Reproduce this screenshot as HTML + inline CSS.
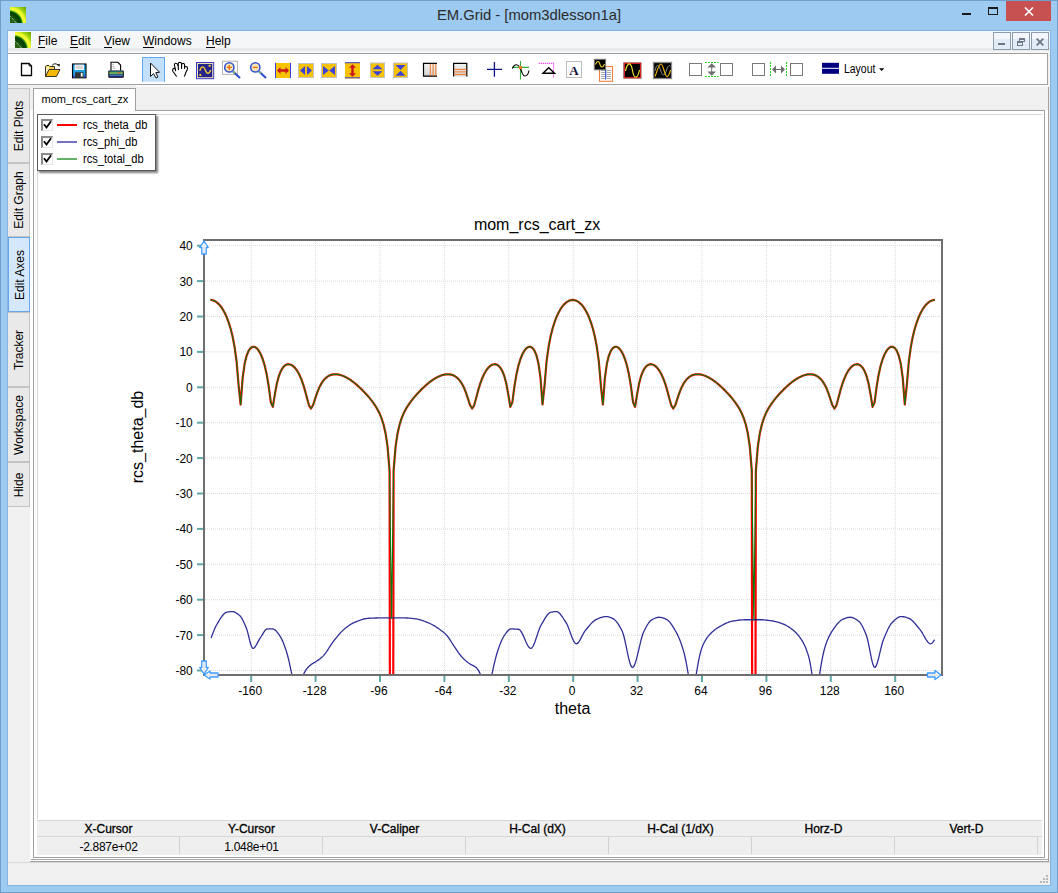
<!DOCTYPE html>
<html><head><meta charset="utf-8">
<style>
html,body{margin:0;padding:0;width:1058px;height:893px;overflow:hidden;background:#9ccaf0;font-family:"Liberation Sans",sans-serif;}
.abs{position:absolute;}
#frame{position:absolute;left:0;top:0;width:1058px;height:893px;box-sizing:border-box;border:1px solid #6f9ecb;background:#9ccaf0;}
#client{position:absolute;left:7px;top:30px;width:1044px;height:856px;box-sizing:border-box;border:1px solid #86b4e0;}
#title{position:absolute;left:0;top:8px;width:1058px;text-align:center;font-size:14.8px;color:#2b2b2b;line-height:15px;}
#menubar{position:absolute;left:8px;top:31px;width:1042px;height:22px;background:#f5f6f7;}
#menubar .m{position:absolute;top:4px;font-size:12px;line-height:12px;color:#000;}
#menubar .m u{text-decoration:none;position:relative;}
#menubar .m u:after{content:"";position:absolute;left:0;right:0;bottom:0px;height:1px;background:#000;}
#toolbar{position:absolute;left:8px;top:53px;width:1040px;height:32px;background:#fff;border:1px solid #a0a0a0;border-left:none;box-sizing:border-box;}
#appbg{position:absolute;left:8px;top:53px;width:1042px;height:832px;background:#f0f0f0;}
.vtab{position:absolute;left:8px;width:22px;background:#e9e9e9;border:1px solid #c3c3c3;border-left:none;box-sizing:border-box;}
.vtab span{position:absolute;left:calc(50% + 0.5px);top:50%;transform:translate(-50%,-50%) rotate(-90deg);font-size:12px;white-space:nowrap;color:#000;line-height:12px;}
.vtab.sel{background:#d5e8fb;border:1px solid #66a6ec;}
#status{position:absolute;left:8px;top:862px;width:1042px;height:23px;background:#f0f0f0;border-top:1px solid #d9d9d9;box-sizing:border-box;}
.hd{position:absolute;top:823px;width:143px;text-align:center;font-size:12px;line-height:13px;color:#000;-webkit-text-stroke:0.3px #000;}
.vl{position:absolute;top:841px;width:143px;text-align:center;font-size:12px;line-height:13px;color:#000;letter-spacing:-0.3px;}
.sep{position:absolute;top:837px;width:1px;height:17px;background:#d2d2d2;}
.cb{position:absolute;left:41px;width:12px;height:12px;box-sizing:border-box;background:#fff;border-top:2px solid #8a8a8a;border-left:2px solid #8a8a8a;border-right:1px solid #e6e6e6;border-bottom:1px solid #e6e6e6;}
.lg{position:absolute;left:82.5px;font-size:12.5px;line-height:12px;color:#000;transform:scaleX(0.89);transform-origin:0 0;}
</style></head><body>
<div id="frame"></div>
<svg width="0" height="0" style="position:absolute"><defs><radialGradient id="icg" gradientUnits="userSpaceOnUse" cx="-1" cy="17" r="23"><stop offset="0" stop-color="#3a6a18"/><stop offset="0.3" stop-color="#1a5a0c"/><stop offset="0.5" stop-color="#033a05"/><stop offset="0.56" stop-color="#1e8a0c"/><stop offset="0.62" stop-color="#f4fa30"/><stop offset="0.72" stop-color="#eef830"/><stop offset="0.8" stop-color="#a8dc10"/><stop offset="1" stop-color="#70a800"/></radialGradient></defs></svg>
<!-- title bar -->
<svg class="abs" style="left:10px;top:7px" width="16" height="16" viewBox="0 0 16 16">
<rect width="16" height="16" fill="url(#icg)"/>
<path d="M0.5 9.5 L6.5 16" stroke="#e8e8e8" stroke-width="1" stroke-dasharray="1 1"/>
</svg>
<div id="title">EM.Grid - [mom3dlesson1a]</div>
<div class="abs" style="left:962px;top:13px;width:9px;height:2px;background:#1a1a1a"></div>
<div class="abs" style="left:988px;top:7px;width:10px;height:8px;border:1px solid #1a1a1a;border-top-width:2px;box-sizing:border-box"></div>
<div class="abs" style="left:1006px;top:1px;width:45px;height:20px;background:#c75050"></div>
<svg class="abs" style="left:1024px;top:7px" width="10" height="9" viewBox="0 0 10 9"><path d="M1 0.5 L9 8.5 M9 0.5 L1 8.5" stroke="#fff" stroke-width="1.6"/></svg>

<div id="client"></div>
<div id="appbg"></div>
<!-- menubar -->
<div id="menubar">
<div class="abs" style="left:0;top:17px;width:1042px;height:3px;background:#e9eaeb"></div>
<svg class="abs" style="left:7px;top:1px" width="16" height="16" viewBox="0 0 16 16">
<rect width="16" height="16" fill="url(#icg)"/>
<path d="M0.5 9.5 L6.5 16" stroke="#e8e8e8" stroke-width="1" stroke-dasharray="1 1"/>
</svg>
<div class="m" style="left:30px"><u>F</u>ile</div>
<div class="m" style="left:62px"><u>E</u>dit</div>
<div class="m" style="left:96px"><u>V</u>iew</div>
<div class="m" style="left:135px"><u>W</u>indows</div>
<div class="m" style="left:198px"><u>H</u>elp</div>
<div class="abs" style="left:985px;top:1px;width:18px;height:18px;background:linear-gradient(#f3f7fc 0,#f3f7fc 35%,#e2ebf6 36%);border:1px solid #8d9db0;box-sizing:border-box"><div class="abs" style="left:4px;top:10px;width:7px;height:2px;background:#6b7785"></div></div>
<div class="abs" style="left:1004px;top:1px;width:18px;height:18px;background:linear-gradient(#f3f7fc 0,#f3f7fc 35%,#e2ebf6 36%);border:1px solid #8d9db0;box-sizing:border-box">
<div class="abs" style="left:6px;top:5px;width:6px;height:4px;border:1px solid #6b7785;border-top-width:2px;box-sizing:border-box"></div>
<div class="abs" style="left:4px;top:8px;width:6px;height:5px;border:1px solid #6b7785;border-top-width:2px;box-sizing:border-box;background:#e2ebf6"></div></div>
<div class="abs" style="left:1023px;top:1px;width:18px;height:18px;background:linear-gradient(#f3f7fc 0,#f3f7fc 35%,#e2ebf6 36%);border:1px solid #8d9db0;box-sizing:border-box">
<svg class="abs" style="left:4px;top:5px" width="8" height="8" viewBox="0 0 8 8"><path d="M0.7 0.7 L7.3 7.3 M7.3 0.7 L0.7 7.3" stroke="#6b7785" stroke-width="1.8"/></svg></div>
</div>

<div id="toolbar"></div>
<svg class="abs" style="left:0;top:0" width="1058" height="90" viewBox="0 0 1058 90">
<!-- new -->
<path d="M21.5 63.5 H29 L31.5 66 V75.5 H21.5 Z" fill="#fff" stroke="#000" stroke-width="1.3" stroke-linejoin="miter"/>
<path d="M29 63.5 V66 H31.5" fill="none" stroke="#000" stroke-width="0.8"/>
<!-- open folder -->
<path d="M45.5 76.5 V66.5 L46.5 65.5 H49 L50 66.5 H54.5 V69" fill="#f7d24a" stroke="#222" stroke-width="0.9"/>
<path d="M46.2 67 L49 66.5 L49 75 L46.2 76 Z" fill="#fbeebb"/>
<path d="M45.5 76.5 L49 69.5 H60 L56.5 76.5 Z" fill="#f3b80a" stroke="#222" stroke-width="0.9" stroke-linejoin="round"/>
<path d="M52 65.5 Q55 62 58.5 65.5" fill="none" stroke="#111" stroke-width="1"/>
<path d="M57 64.5 L59.5 66.8 L59.8 63.8 Z" fill="#111"/>
<!-- save -->
<rect x="72.5" y="64" width="13.5" height="13.8" fill="#1fa1e6" stroke="#000" stroke-width="1.1"/>
<rect x="74.6" y="64.6" width="9.3" height="5.4" fill="#fff"/>
<rect x="75.6" y="65.4" width="7.3" height="3.6" fill="#d6d6d6"/>
<rect x="75" y="72.3" width="8.5" height="5.2" fill="#333"/>
<rect x="80.8" y="73" width="1.8" height="3.6" fill="#fff"/>
<rect x="73" y="75.3" width="1.3" height="2" fill="#3b3bd1"/>
<rect x="84.3" y="75.3" width="1.3" height="2" fill="#3b3bd1"/>
<!-- printer -->
<path d="M111 70.5 V62.3 H117.8 L120.6 65 V70.5" fill="#fff" stroke="#000" stroke-width="1.1"/>
<path d="M112.5 64.5 h1.5 M112.5 66.5 h2 M112.5 68.2 h3" stroke="#999" stroke-width="0.7"/>
<rect x="108.3" y="70.5" width="15.5" height="7.3" rx="1" fill="#000"/>
<rect x="109.3" y="71.5" width="13.5" height="1" fill="#3cc9f0"/>
<rect x="109.3" y="72.5" width="13.5" height="1.2" fill="#c4e830"/>
<rect x="109.3" y="73.7" width="13.5" height="0.8" fill="#3cc9f0"/>
<rect x="118" y="72.3" width="2.5" height="1" fill="#f04040"/>
<rect x="109.3" y="75.2" width="13.5" height="1.2" fill="#6a8ee8"/>
<rect x="109.3" y="76.4" width="13.5" height="0.8" fill="#1a1a88"/>
<!-- pointer button -->
<rect x="142.5" y="57.5" width="22" height="24.3" fill="#c3e0fa"/><path d="M142.5 81.8 V57.5 H164.5 V81.8" fill="none" stroke="#62a6ee" stroke-width="1"/>
<path d="M150.5 63 V76.5 L153.6 73.6 L156 78 L158 77 L155.8 72.6 L159.6 72.3 Z" fill="#fff" stroke="#111" stroke-width="1" stroke-linejoin="round"/>
<!-- hand -->
<g fill="none" stroke="#000" stroke-width="1.1" stroke-linecap="round" stroke-linejoin="round">
<path d="M176.4 76.2 L173 71.5 C172 69.8 173 68.2 174.5 68.3 C175.5 68.4 175.6 69.5 175.6 70.8"/>
<path d="M175.4 69.8 L174.5 65.5 C174.2 63.8 175 63.2 175.9 63.2 C176.9 63.2 177.7 64 177.9 65.5"/>
<path d="M178.4 69.6 L178.2 64 C178.3 62.6 179.2 62.2 180 62.2 C181 62.3 181.6 63 181.6 64.2 L181.6 68.4"/>
<path d="M181.7 64.5 C182 63.6 182.6 63.3 183.3 63.3 C184.2 63.4 184.6 64.2 184.6 65 L184.6 68.4"/>
<path d="M184.7 67 C185.3 66.3 186.5 66.3 187.2 67 C187.8 67.8 187.7 68.8 187.2 69.8 L185.8 72.5 L184.6 76.2"/>
</g>
<!-- scope blue -->
<rect x="196.5" y="62.5" width="17.2" height="16.2" fill="#efe2a8" stroke="#3a3ad0" stroke-width="1"/>
<rect x="198" y="64" width="14.2" height="13.2" fill="#24248c"/>
<path d="M199.8 71 C201.2 66 203.6 65.5 205.2 69.8 C206.8 74.5 209.2 74.5 210.6 70" fill="none" stroke="#f6d030" stroke-width="1.3"/>
<rect x="208.6" y="64.8" width="2" height="2" fill="#f6d030"/>
<rect x="199.3" y="73.9" width="2" height="2" fill="#f6d030"/>
<!-- zoom in -->
<rect x="222.5" y="61.2" width="15" height="13.2" fill="#fff" stroke="#b5b5b5" stroke-width="1"/>
<line x1="233" y1="71.5" x2="240" y2="78" stroke="#3050d0" stroke-width="2.2"/>
<line x1="233" y1="71.5" x2="235" y2="73.3" stroke="#8cc040" stroke-width="1.3"/>
<circle cx="229.3" cy="67.4" r="4.6" fill="#f5e6b2" stroke="#3a55d8" stroke-width="1.6"/>
<path d="M226.8 67.4 H231.8 M229.3 64.9 V69.9" stroke="#f26a10" stroke-width="1.3"/>
<!-- zoom out -->
<line x1="259" y1="71.5" x2="266" y2="78" stroke="#3050d0" stroke-width="2.2"/>
<line x1="259" y1="71.5" x2="261" y2="73.3" stroke="#8cc040" stroke-width="1.3"/>
<circle cx="255.3" cy="67.4" r="4.6" fill="#f5e6b2" stroke="#3a55d8" stroke-width="1.6"/>
<path d="M252.8 67.4 H257.8" stroke="#f26a10" stroke-width="1.3"/>
<!-- yellow icons -->
<rect x="275" y="63" width="16" height="15" fill="#f7c200"/>
<path d="M275.5 62.8 V78 M290.5 62.8 V78" stroke="#3c3cd8" stroke-width="1"/>
<path d="M277 70.5 L280.5 67 V69.3 H285.5 V67 L289 70.5 L285.5 74 V71.7 H280.5 V74 Z" fill="#c8161a"/>
<rect x="298.5" y="63.5" width="15" height="14" fill="#f7c200" stroke="#c2c2c2" stroke-width="1"/>
<path d="M300 70.5 L305 66 V75 Z M312 70.5 L307 66 V75 Z" fill="#3c44d8"/>
<rect x="321.5" y="63.5" width="15" height="14" fill="#f7c200" stroke="#c2c2c2" stroke-width="1"/>
<path d="M323 66 L328.8 70.5 L323 75 Z M335 66 L329.2 70.5 L335 75 Z" fill="#3c44d8"/>
<rect x="345" y="62.5" width="15" height="16" fill="#f7c200"/>
<path d="M345 62.7 H360 M345 77.8 H360" stroke="#3c3cd8" stroke-width="1"/>
<path d="M352.5 64.3 L356 67.8 H353.7 V73.2 H356 L352.5 76.7 L349 73.2 H351.3 V67.8 H349 Z" fill="#c8161a"/>
<rect x="370.5" y="63" width="14" height="14.5" fill="#f7c200" stroke="#c2c2c2" stroke-width="1"/>
<path d="M377.5 64.8 L382.5 69.3 H372.5 Z M377.5 75.8 L382.5 71.3 H372.5 Z" fill="#3c44d8"/>
<rect x="393.5" y="63" width="14" height="14.5" fill="#f7c200" stroke="#c2c2c2" stroke-width="1"/>
<path d="M395.5 65 H405.5 L400.5 70 Z M395.5 75.8 H405.5 L400.5 70.8 Z" fill="#3c44d8"/>
<!-- vertical/horizontal line boxes -->
<defs><linearGradient id="gg" x1="0" y1="0" x2="0" y2="1"><stop offset="0" stop-color="#f4f4f4"/><stop offset="1" stop-color="#d2d2d2"/></linearGradient></defs>
<rect x="423" y="63" width="14" height="13.5" fill="url(#gg)"/>
<path d="M423 63.4 H437 M423 76.2 H437 M423.5 63 V76.6" stroke="#000" stroke-width="1.2"/>
<path d="M430.3 63.8 V75.8 M433.1 63.8 V75.8 M435.8 63.8 V75.8" stroke="#f47820" stroke-width="1"/>
<rect x="453.2" y="63" width="14" height="13.5" fill="url(#gg)"/>
<path d="M453.2 63.4 H467.2 M453.6 63 V76.6 M466.8 63 V76.6" stroke="#000" stroke-width="1.2"/>
<path d="M454 69.4 H466.4 M454 71.9 H466.4 M454 74.4 H466.4" stroke="#f47820" stroke-width="1"/>
<!-- crosshair -->
<path d="M487 69.3 H502 M494.4 61.9 V76.7" stroke="#10108c" stroke-width="1.3"/>
<!-- green cross sine -->
<path d="M512 67.4 H529 M520.5 61 V79.5" stroke="#30b040" stroke-width="1.1"/>
<path d="M512.5 68.5 C514 64 517.5 63.5 520 67.4 C521.5 70 522 76 525 76 C527.5 76 528.5 73 529 70.5" fill="none" stroke="#000" stroke-width="1.15"/>
<rect x="519" y="66" width="3" height="3" fill="#f47820"/>
<!-- triangle -->
<path d="M538.8 63.3 H553.5 V78" fill="none" stroke="#f020f0" stroke-width="1.2" stroke-dasharray="1 1"/>
<path d="M543 73.3 L548.7 67.8 L554.6 73.3 Z" fill="none" stroke="#000" stroke-width="1.4" stroke-linejoin="miter"/>
<!-- A box -->
<rect x="566.5" y="61.5" width="15" height="16" fill="#fff" stroke="#bdbdbd" stroke-width="1"/>
<text x="574" y="74.5" text-anchor="middle" font-family="Liberation Serif, serif" font-weight="bold" font-size="13" fill="#10103a">A</text>
<!-- scope+doc -->
<rect x="599.5" y="66.5" width="13" height="14.8" fill="#fff" stroke="#f08040" stroke-width="1.1"/>
<path d="M601 70.5 H605 M601 72.5 H605 M601 74.5 H605 M601 76.5 H605 M601 78.5 H605 M607 70.5 H611 M607 72.5 H611 M607 74.5 H611 M607 76.5 H611 M607 78.5 H611" stroke="#a8a8a8" stroke-width="1"/>
<path d="M605.7 68.5 V79.5" stroke="#3050d0" stroke-width="1.2"/>
<rect x="594.3" y="59.3" width="11.3" height="10.5" fill="#000" stroke="#7a7a7a" stroke-width="1"/>
<path d="M595.5 64.5 C597 60.5 599 60.5 600 64.5 C601 68 603 68 604.5 64" fill="none" stroke="#f6d030" stroke-width="1.1"/>
<!-- red scope -->
<rect x="623.2" y="62.3" width="18.4" height="16.4" fill="#888"/>
<rect x="624.3" y="63.3" width="16.2" height="14.4" fill="#000" stroke="#e02020" stroke-width="1.2"/>
<path d="M625.5 71 C627.5 61.5 631 61.5 632.5 70.5 C634 79.5 637.5 79.5 639.5 70" fill="none" stroke="#f6e030" stroke-width="1.2"/>
<!-- gray scope -->
<rect x="653.5" y="62.5" width="18" height="16" fill="#000" stroke="#8a8a8a" stroke-width="1.3"/>
<path d="M655 71 C656.5 63.5 658.5 63.5 660.5 70 C662.5 76.5 664.5 76.5 666.5 70 C668 65.5 669.5 64.5 670.5 66.5" fill="none" stroke="#9a9a9a" stroke-width="0.9"/>
<path d="M655 76.5 C657 72 658.5 64 661 64 C663.5 64 664.5 76.5 667 76.5 C669 76.5 670 72 670.5 70" fill="none" stroke="#f6c000" stroke-width="1.1"/>
<!-- spacing boxes -->
<g fill="#fff" stroke="#7a7a7a" stroke-width="1">
<rect x="689.5" y="63.5" width="12" height="12"/>
<rect x="720.5" y="63.5" width="12" height="12"/>
<rect x="752.5" y="63.5" width="12" height="12"/>
<rect x="790.5" y="63.5" width="12" height="12"/>
</g>
<path d="M705 62.5 H718.5 M705 76.5 H718.5" stroke="#22d022" stroke-width="1.1" stroke-dasharray="2 1"/>
<path d="M711.7 63.3 L716 67.6 H707.4 Z M711.7 75.7 L716 71.4 H707.4 Z" fill="#6e6e6e"/>
<rect x="711.2" y="67" width="1" height="5" fill="#6e6e6e"/>
<path d="M770.5 62 V77 M786.5 62 V77" stroke="#22d022" stroke-width="1.1" stroke-dasharray="2 1"/>
<path d="M772 69.5 L776 65.5 V73.5 Z M785 69.5 L781 65.5 V73.5 Z" fill="#6e6e6e"/>
<rect x="775.5" y="69" width="6" height="1" fill="#6e6e6e"/>
<!-- layout -->
<rect x="822" y="62.8" width="17" height="5" fill="#000080"/>
<rect x="822" y="68.8" width="17" height="5" fill="#000080"/>
<path d="M879 68.2 H884.3 L881.65 71 Z" fill="#000"/>
</svg>

<div class="abs" style="left:843.5px;top:63px;font-size:12px;line-height:12px;color:#000;transform:scaleX(0.87);transform-origin:0 0">Layout</div>

<!-- vertical tabs -->
<div class="vtab" style="top:88px;height:75px"><span>Edit Plots</span></div>
<div class="vtab" style="top:163px;height:74px"><span>Edit Graph</span></div>
<div class="vtab sel" style="top:237px;height:75px"><span>Edit Axes</span></div>
<div class="vtab" style="top:312px;height:75px"><span>Tracker</span></div>
<div class="vtab" style="top:387px;height:75px"><span>Workspace</span></div>
<div class="vtab" style="top:462px;height:45px"><span>Hide</span></div>

<!-- document panel -->
<div class="abs" style="left:30px;top:110px;width:1019px;height:749px;background:#fff;"></div>
<div class="abs" style="left:33px;top:110px;width:1012px;height:748px;border:1px solid #a0a0a0;box-sizing:border-box;border-top:none"></div>
<div class="abs" style="left:30px;top:858px;width:1019px;height:1px;background:#fff"></div><div class="abs" style="left:31px;top:859px;width:1018px;height:1px;background:#a8a8a8"></div><div class="abs" style="left:30px;top:860px;width:1019px;height:1px;background:#fff"></div><div class="abs" style="left:30px;top:861px;width:1019px;height:1px;background:#a0a0a0"></div>
<div class="abs" style="left:1045px;top:110px;width:3px;height:748px;background:#fff;"></div>
<div class="abs" style="left:1048px;top:86px;width:1px;height:776px;background:#a0a0a0;"></div>
<div class="abs" style="left:136px;top:85px;width:913px;height:2px;background:#fbfbfb"></div>
<div class="abs" style="left:33px;top:88px;width:103px;height:23px;background:#fff;border:1px solid #a0a0a0;border-bottom:none;box-sizing:border-box;">
<span class="abs" style="left:7.5px;top:5px;font-size:11px;line-height:11px;">mom_rcs_cart_zx</span></div>
<div class="abs" style="left:136px;top:110px;width:909px;height:1px;background:#a0a0a0"></div>
<div class="abs" style="left:37px;top:114px;width:1005px;height:705px;border:1px solid #d6d6d6;border-bottom:none;border-right:none;box-sizing:border-box"></div>

<svg class="abs" style="left:0;top:0" width="1058" height="893" viewBox="0 0 1058 893">
<defs><clipPath id="pc"><rect x="204" y="240" width="738" height="435"/></clipPath></defs>
<g stroke="#d9d9d9" stroke-width="1" stroke-dasharray="1 1" fill="none"><line x1="251.2" y1="241" x2="251.2" y2="674"/>
<line x1="315.6" y1="241" x2="315.6" y2="674"/>
<line x1="380.0" y1="241" x2="380.0" y2="674"/>
<line x1="444.4" y1="241" x2="444.4" y2="674"/>
<line x1="508.8" y1="241" x2="508.8" y2="674"/>
<line x1="573.2" y1="241" x2="573.2" y2="674"/>
<line x1="637.6" y1="241" x2="637.6" y2="674"/>
<line x1="702.0" y1="241" x2="702.0" y2="674"/>
<line x1="766.4" y1="241" x2="766.4" y2="674"/>
<line x1="830.8" y1="241" x2="830.8" y2="674"/>
<line x1="895.2" y1="241" x2="895.2" y2="674"/>
<line x1="205" y1="670.5" x2="941" y2="670.5"/>
<line x1="205" y1="635.1" x2="941" y2="635.1"/>
<line x1="205" y1="599.7" x2="941" y2="599.7"/>
<line x1="205" y1="564.3" x2="941" y2="564.3"/>
<line x1="205" y1="528.9" x2="941" y2="528.9"/>
<line x1="205" y1="493.5" x2="941" y2="493.5"/>
<line x1="205" y1="458.1" x2="941" y2="458.1"/>
<line x1="205" y1="422.7" x2="941" y2="422.7"/>
<line x1="205" y1="387.3" x2="941" y2="387.3"/>
<line x1="205" y1="351.9" x2="941" y2="351.9"/>
<line x1="205" y1="316.5" x2="941" y2="316.5"/>
<line x1="205" y1="281.1" x2="941" y2="281.1"/>
<line x1="205" y1="245.7" x2="941" y2="245.7"/></g>
<g clip-path="url(#pc)" fill="none" stroke-linejoin="round">
<path d="M210.45 299.95 L212.46 300.18 L214.48 300.90 L216.49 302.11 L218.50 303.83 L220.51 306.10 L222.53 308.96 L224.54 312.50 L226.55 316.82 L228.56 322.07 L230.57 328.52 L232.59 336.57 L234.60 347.05 L236.61 361.72 L238.62 385.51 L240.64 404.52 L242.65 377.79 L244.66 363.54 L246.68 355.48 L248.69 350.67 L250.70 347.96 L252.71 346.81 L254.73 346.93 L256.74 348.22 L258.75 350.64 L260.76 354.26 L262.78 359.24 L264.79 365.91 L266.80 374.86 L268.81 387.04 L270.83 402.40 L272.84 406.84 L274.85 394.36 L276.86 383.44 L278.88 375.98 L280.89 370.94 L282.90 367.60 L284.91 365.52 L286.93 364.44 L288.94 364.20 L290.95 364.70 L292.96 365.92 L294.98 367.84 L296.99 370.51 L299.00 374.00 L301.01 378.43 L303.03 383.93 L305.04 390.61 L307.05 398.29 L309.06 405.55 L311.08 408.51 L313.09 405.05 L315.10 398.80 L317.11 392.79 L319.12 387.82 L321.14 383.89 L323.15 380.85 L325.16 378.54 L327.18 376.82 L329.19 375.61 L331.20 374.81 L333.21 374.37 L335.23 374.23 L337.24 374.35 L339.25 374.69 L341.26 375.25 L343.28 375.98 L345.29 376.89 L347.30 377.95 L349.31 379.17 L351.33 380.52 L353.34 382.01 L355.35 383.63 L357.36 385.36 L359.38 387.20 L361.39 389.14 L363.40 391.18 L365.41 393.31 L367.43 395.54 L369.44 397.89 L371.45 400.38 L373.46 403.07 L375.48 406.02 L377.49 409.38 L379.50 413.34 L381.51 418.20 L383.53 424.48 L385.54 433.17 L387.55 446.37 L389.56 470.83 L391.58 1802.80 L393.59 470.83 L395.60 446.37 L397.61 433.17 L399.62 424.48 L401.64 418.20 L403.65 413.34 L405.66 409.38 L407.68 406.02 L409.69 403.07 L411.70 400.38 L413.71 397.89 L415.73 395.54 L417.74 393.31 L419.75 391.18 L421.76 389.14 L423.78 387.20 L425.79 385.36 L427.80 383.63 L429.81 382.01 L431.83 380.52 L433.84 379.17 L435.85 377.95 L437.86 376.89 L439.88 375.98 L441.89 375.25 L443.90 374.69 L445.91 374.35 L447.93 374.23 L449.94 374.37 L451.95 374.81 L453.96 375.61 L455.98 376.82 L457.99 378.54 L460.00 380.85 L462.01 383.89 L464.03 387.82 L466.04 392.79 L468.05 398.80 L470.06 405.05 L472.08 408.51 L474.09 405.55 L476.10 398.29 L478.11 390.61 L480.13 383.93 L482.14 378.43 L484.15 374.00 L486.16 370.51 L488.18 367.84 L490.19 365.92 L492.20 364.70 L494.21 364.20 L496.23 364.44 L498.24 365.52 L500.25 367.60 L502.26 370.94 L504.28 375.98 L506.29 383.44 L508.30 394.36 L510.31 406.84 L512.33 402.40 L514.34 387.04 L516.35 374.86 L518.36 365.91 L520.38 359.24 L522.39 354.26 L524.40 350.64 L526.41 348.22 L528.43 346.93 L530.44 346.81 L532.45 347.96 L534.46 350.67 L536.48 355.48 L538.49 363.54 L540.50 377.79 L542.51 404.52 L544.53 385.51 L546.54 361.72 L548.55 347.05 L550.56 336.57 L552.58 328.52 L554.59 322.07 L556.60 316.82 L558.61 312.50 L560.62 308.96 L562.64 306.10 L564.65 303.83 L566.66 302.11 L568.68 300.90 L570.69 300.18 L572.70 299.95 L574.71 300.18 L576.73 300.90 L578.74 302.11 L580.75 303.83 L582.76 306.10 L584.78 308.96 L586.79 312.50 L588.80 316.82 L590.81 322.07 L592.83 328.52 L594.84 336.57 L596.85 347.05 L598.86 361.72 L600.88 385.51 L602.89 404.52 L604.90 377.79 L606.91 363.54 L608.93 355.48 L610.94 350.67 L612.95 347.96 L614.96 346.81 L616.98 346.93 L618.99 348.22 L621.00 350.64 L623.01 354.26 L625.03 359.24 L627.04 365.91 L629.05 374.86 L631.06 387.04 L633.08 402.40 L635.09 406.84 L637.10 394.36 L639.11 383.44 L641.12 375.98 L643.14 370.94 L645.15 367.60 L647.16 365.52 L649.18 364.44 L651.19 364.20 L653.20 364.70 L655.21 365.92 L657.23 367.84 L659.24 370.51 L661.25 374.00 L663.26 378.43 L665.28 383.93 L667.29 390.61 L669.30 398.29 L671.31 405.55 L673.33 408.51 L675.34 405.05 L677.35 398.80 L679.36 392.79 L681.38 387.82 L683.39 383.89 L685.40 380.85 L687.41 378.54 L689.43 376.82 L691.44 375.61 L693.45 374.81 L695.46 374.37 L697.48 374.23 L699.49 374.35 L701.50 374.69 L703.51 375.25 L705.53 375.98 L707.54 376.89 L709.55 377.95 L711.56 379.17 L713.58 380.52 L715.59 382.01 L717.60 383.63 L719.61 385.36 L721.62 387.20 L723.64 389.14 L725.65 391.18 L727.66 393.31 L729.68 395.54 L731.69 397.89 L733.70 400.38 L735.71 403.07 L737.73 406.02 L739.74 409.38 L741.75 413.34 L743.76 418.20 L745.78 424.48 L747.79 433.17 L749.80 446.37 L751.81 470.83 L753.83 1802.80 L755.84 470.83 L757.85 446.37 L759.86 433.17 L761.88 424.48 L763.89 418.20 L765.90 413.34 L767.91 409.38 L769.93 406.02 L771.94 403.07 L773.95 400.38 L775.96 397.89 L777.98 395.54 L779.99 393.31 L782.00 391.18 L784.01 389.14 L786.03 387.20 L788.04 385.36 L790.05 383.63 L792.06 382.01 L794.08 380.52 L796.09 379.17 L798.10 377.95 L800.11 376.89 L802.12 375.98 L804.14 375.25 L806.15 374.69 L808.16 374.35 L810.18 374.23 L812.19 374.37 L814.20 374.81 L816.21 375.61 L818.23 376.82 L820.24 378.54 L822.25 380.85 L824.26 383.89 L826.28 387.82 L828.29 392.79 L830.30 398.80 L832.31 405.05 L834.33 408.51 L836.34 405.55 L838.35 398.29 L840.36 390.61 L842.38 383.93 L844.39 378.43 L846.40 374.00 L848.41 370.51 L850.43 367.84 L852.44 365.92 L854.45 364.70 L856.46 364.20 L858.48 364.44 L860.49 365.52 L862.50 367.60 L864.51 370.94 L866.53 375.98 L868.54 383.44 L870.55 394.36 L872.56 406.84 L874.58 402.40 L876.59 387.04 L878.60 374.86 L880.61 365.91 L882.62 359.24 L884.64 354.26 L886.65 350.64 L888.66 348.22 L890.68 346.93 L892.69 346.81 L894.70 347.96 L896.71 350.67 L898.73 355.48 L900.74 363.54 L902.75 377.79 L904.76 404.52 L906.78 385.51 L908.79 361.72 L910.80 347.05 L912.81 336.57 L914.83 328.52 L916.84 322.07 L918.85 316.82 L920.86 312.50 L922.88 308.96 L924.89 306.10 L926.90 303.83 L928.91 302.11 L930.93 300.90 L932.94 300.18 L934.95 299.95" stroke="#ff0000" stroke-width="2.2"/>
<path d="M211.05 638.14 L212.06 635.38 L213.07 632.72 L214.07 630.21 L215.08 627.89 L216.09 625.80 L217.09 623.98 L218.10 622.30 L219.10 620.63 L220.11 618.99 L221.12 617.44 L222.12 616.02 L223.13 614.77 L224.14 613.72 L225.14 612.92 L226.15 612.41 L227.15 612.17 L228.16 611.98 L229.17 611.82 L230.17 611.70 L231.18 611.62 L232.19 611.59 L233.19 611.69 L234.20 611.96 L235.20 612.39 L236.21 612.95 L237.22 613.61 L238.22 614.35 L239.23 615.15 L240.24 616.07 L241.24 617.39 L242.25 619.08 L243.25 621.05 L244.26 623.23 L245.27 625.53 L246.27 627.87 L247.28 630.83 L248.29 634.66 L249.29 638.83 L250.30 642.81 L251.30 646.06 L252.31 648.04 L253.32 648.35 L254.32 647.71 L255.33 646.52 L256.34 644.92 L257.34 643.09 L258.35 641.17 L259.35 639.32 L260.36 637.71 L261.37 636.25 L262.37 634.59 L263.38 632.88 L264.39 631.30 L265.39 630.00 L266.40 629.16 L267.40 628.94 L268.41 628.94 L269.42 628.94 L270.42 628.94 L271.43 628.94 L272.44 628.94 L273.44 629.02 L274.45 629.48 L275.45 630.28 L276.46 631.34 L277.47 632.58 L278.47 633.93 L279.48 635.31 L280.49 636.84 L281.49 638.70 L282.50 640.86 L283.50 643.27 L284.51 645.92 L285.52 648.75 L286.52 651.78 L287.53 655.26 L288.54 659.22 L289.54 663.58 L290.55 668.27 L291.55 673.23 L292.56 679.22 L293.57 687.20 L294.57 695.86 L295.58 703.86 L296.59 709.84 L297.59 712.46 L298.60 710.35 L299.60 704.10 L300.61 695.54 L301.62 686.48 L302.62 678.78 L303.63 674.25 L304.64 672.13 L305.64 670.38 L306.65 668.94 L307.65 667.74 L308.66 666.70 L309.67 665.75 L310.67 664.90 L311.68 664.17 L312.69 663.52 L313.69 662.92 L314.70 662.34 L315.70 661.73 L316.71 661.08 L317.72 660.36 L318.72 659.64 L319.73 658.91 L320.74 658.14 L321.74 657.31 L322.75 656.39 L323.75 655.35 L324.76 654.14 L325.77 652.79 L326.77 651.35 L327.78 649.82 L328.79 648.25 L329.79 646.67 L330.80 645.10 L331.80 643.57 L332.81 642.12 L333.82 640.77 L334.82 639.52 L335.83 638.29 L336.84 637.07 L337.84 635.87 L338.85 634.68 L339.85 633.53 L340.86 632.42 L341.87 631.36 L342.87 630.35 L343.88 629.40 L344.89 628.52 L345.89 627.72 L346.90 626.96 L347.90 626.23 L348.91 625.53 L349.92 624.87 L350.92 624.25 L351.93 623.67 L352.94 623.13 L353.94 622.64 L354.95 622.21 L355.95 621.80 L356.96 621.40 L357.97 621.00 L358.97 620.61 L359.98 620.24 L360.99 619.88 L361.99 619.55 L363.00 619.25 L364.00 618.99 L365.01 618.75 L366.02 618.57 L367.02 618.42 L368.03 618.33 L369.04 618.27 L370.04 618.22 L371.05 618.17 L372.05 618.13 L373.06 618.09 L374.07 618.05 L375.07 618.02 L376.08 618.00 L377.09 617.98 L378.09 617.97 L379.10 617.96 L380.10 617.96 L381.11 617.96 L382.12 617.96 L383.12 617.96 L384.13 617.96 L385.14 617.96 L386.14 617.96 L387.15 617.96 L388.15 617.96 L389.16 617.96 L390.17 617.96 L391.17 617.96 L392.18 617.96 L393.19 617.96 L394.19 617.96 L395.20 617.96 L396.20 617.96 L397.21 617.96 L398.22 617.96 L399.22 617.96 L400.23 617.96 L401.24 617.96 L402.24 617.96 L403.25 617.96 L404.25 617.96 L405.26 617.96 L406.27 617.98 L407.27 618.01 L408.28 618.07 L409.29 618.14 L410.29 618.22 L411.30 618.32 L412.30 618.42 L413.31 618.53 L414.32 618.65 L415.32 618.78 L416.33 618.94 L417.34 619.14 L418.34 619.37 L419.35 619.63 L420.35 619.92 L421.36 620.23 L422.37 620.55 L423.37 620.90 L424.38 621.26 L425.39 621.64 L426.39 622.02 L427.40 622.41 L428.40 622.81 L429.41 623.24 L430.42 623.72 L431.42 624.23 L432.43 624.77 L433.44 625.34 L434.44 625.93 L435.45 626.55 L436.45 627.19 L437.46 627.85 L438.47 628.53 L439.47 629.21 L440.48 629.92 L441.49 630.66 L442.49 631.43 L443.50 632.25 L444.50 633.13 L445.51 634.08 L446.52 635.10 L447.52 636.24 L448.53 637.57 L449.54 639.05 L450.54 640.63 L451.55 642.25 L452.55 643.87 L453.56 645.45 L454.57 646.92 L455.57 648.39 L456.58 649.88 L457.59 651.37 L458.59 652.82 L459.60 654.20 L460.60 655.50 L461.61 656.68 L462.62 657.75 L463.62 658.76 L464.63 659.72 L465.64 660.62 L466.64 661.48 L467.65 662.29 L468.65 663.05 L469.66 663.77 L470.67 664.37 L471.67 664.89 L472.68 665.37 L473.69 665.88 L474.69 666.46 L475.70 667.18 L476.70 668.10 L477.71 669.31 L478.72 670.87 L479.72 672.84 L480.73 675.63 L481.74 681.87 L482.74 690.53 L483.75 699.71 L484.75 707.51 L485.76 712.02 L486.77 711.62 L487.77 706.97 L488.78 699.57 L489.79 690.86 L490.79 682.29 L491.80 675.32 L492.80 670.30 L493.81 665.63 L494.82 661.30 L495.82 657.31 L496.83 653.71 L497.84 650.53 L498.84 647.63 L499.85 644.89 L500.85 642.34 L501.86 640.02 L502.87 637.96 L503.87 636.20 L504.88 634.75 L505.89 633.34 L506.89 631.99 L507.90 630.79 L508.90 629.82 L509.91 629.17 L510.92 628.94 L511.92 628.94 L512.93 628.96 L513.94 629.00 L514.94 629.04 L515.95 629.10 L516.95 629.17 L517.96 629.24 L518.97 629.38 L519.97 630.08 L520.98 631.35 L521.99 633.07 L522.99 635.11 L524.00 637.35 L525.00 639.67 L526.01 641.95 L527.02 644.07 L528.02 645.89 L529.03 647.30 L530.04 648.17 L531.04 648.39 L532.05 647.72 L533.05 646.24 L534.06 644.11 L535.07 641.49 L536.07 638.56 L537.08 635.48 L538.09 632.42 L539.09 629.55 L540.10 627.04 L541.10 625.04 L542.11 623.33 L543.12 621.58 L544.12 619.85 L545.13 618.18 L546.14 616.62 L547.14 615.22 L548.15 614.03 L549.15 613.11 L550.16 612.50 L551.17 612.21 L552.17 612.02 L553.18 611.85 L554.19 611.72 L555.19 611.63 L556.20 611.59 L557.20 611.72 L558.21 612.20 L559.22 613.00 L560.22 614.06 L561.23 615.32 L562.24 616.73 L563.24 618.24 L564.25 619.79 L565.25 621.32 L566.26 622.84 L567.27 624.81 L568.27 627.20 L569.28 629.87 L570.29 632.67 L571.29 635.45 L572.30 638.06 L573.30 640.35 L574.31 642.17 L575.32 643.37 L576.32 643.80 L577.33 643.46 L578.34 642.51 L579.34 641.09 L580.35 639.35 L581.35 637.41 L582.36 635.42 L583.37 633.51 L584.37 631.81 L585.38 630.46 L586.39 629.24 L587.39 628.00 L588.40 626.78 L589.40 625.58 L590.41 624.43 L591.42 623.34 L592.42 622.32 L593.43 621.40 L594.44 620.59 L595.44 619.91 L596.45 619.38 L597.45 618.92 L598.46 618.48 L599.47 618.06 L600.47 617.67 L601.48 617.33 L602.49 617.03 L603.49 616.80 L604.50 616.63 L605.50 616.55 L606.51 616.57 L607.52 616.68 L608.52 616.89 L609.53 617.17 L610.54 617.51 L611.54 617.90 L612.55 618.32 L613.55 618.87 L614.56 619.65 L615.57 620.65 L616.57 621.84 L617.58 623.20 L618.59 624.71 L619.59 626.35 L620.60 628.11 L621.60 629.95 L622.61 632.08 L623.62 635.24 L624.62 639.25 L625.63 643.82 L626.64 648.67 L627.64 653.51 L628.65 658.05 L629.65 662.00 L630.66 665.09 L631.67 667.01 L632.67 667.50 L633.68 666.61 L634.69 664.63 L635.69 661.76 L636.70 658.21 L637.70 654.18 L638.71 649.89 L639.72 645.55 L640.72 641.35 L641.73 637.52 L642.74 634.26 L643.74 631.77 L644.75 629.75 L645.75 627.80 L646.76 625.95 L647.77 624.25 L648.77 622.75 L649.78 621.49 L650.79 620.52 L651.79 619.84 L652.80 619.26 L653.80 618.72 L654.81 618.23 L655.82 617.83 L656.82 617.52 L657.83 617.32 L658.84 617.25 L659.84 617.30 L660.85 617.44 L661.85 617.66 L662.86 617.95 L663.87 618.29 L664.87 618.69 L665.88 619.11 L666.89 619.58 L667.89 620.27 L668.90 621.19 L669.90 622.31 L670.91 623.62 L671.92 625.07 L672.92 626.64 L673.93 628.30 L674.94 630.02 L675.94 631.77 L676.95 633.62 L677.95 635.66 L678.96 637.90 L679.97 640.36 L680.97 643.06 L681.98 645.99 L682.99 649.18 L683.99 652.69 L685.00 656.78 L686.00 661.50 L687.01 666.87 L688.02 672.95 L689.02 681.59 L690.03 694.09 L691.04 705.88 L692.04 712.27 L693.05 709.32 L694.05 699.06 L695.06 686.25 L696.07 675.67 L697.07 669.31 L698.08 663.60 L699.09 658.46 L700.09 653.97 L701.10 650.17 L702.10 647.14 L703.11 644.76 L704.12 642.66 L705.12 640.79 L706.13 639.13 L707.14 637.66 L708.14 636.33 L709.15 635.13 L710.15 634.03 L711.16 633.01 L712.17 632.05 L713.17 631.16 L714.18 630.33 L715.19 629.55 L716.19 628.83 L717.20 628.15 L718.20 627.52 L719.21 626.93 L720.22 626.36 L721.22 625.79 L722.23 625.23 L723.24 624.69 L724.24 624.17 L725.25 623.67 L726.25 623.19 L727.26 622.75 L728.27 622.35 L729.27 621.98 L730.28 621.67 L731.29 621.40 L732.29 621.18 L733.30 621.01 L734.30 620.84 L735.31 620.68 L736.32 620.53 L737.32 620.39 L738.33 620.25 L739.34 620.13 L740.34 620.02 L741.35 619.93 L742.35 619.85 L743.36 619.79 L744.37 619.75 L745.37 619.73 L746.38 619.73 L747.39 619.73 L748.39 619.73 L749.40 619.73 L750.40 619.73 L751.41 619.73 L752.42 619.73 L753.42 619.73 L754.43 619.73 L755.44 619.73 L756.44 619.73 L757.45 619.73 L758.45 619.73 L759.46 619.73 L760.47 619.73 L761.47 619.74 L762.48 619.77 L763.49 619.84 L764.49 619.92 L765.50 620.03 L766.50 620.14 L767.51 620.26 L768.52 620.39 L769.52 620.52 L770.53 620.66 L771.54 620.82 L772.54 621.00 L773.55 621.20 L774.55 621.42 L775.56 621.65 L776.57 621.90 L777.57 622.16 L778.58 622.44 L779.59 622.73 L780.59 623.05 L781.60 623.39 L782.60 623.78 L783.61 624.21 L784.62 624.68 L785.62 625.19 L786.63 625.73 L787.64 626.30 L788.64 626.91 L789.65 627.56 L790.65 628.23 L791.66 628.94 L792.67 629.69 L793.67 630.52 L794.68 631.43 L795.69 632.41 L796.69 633.48 L797.70 634.63 L798.70 635.87 L799.71 637.19 L800.72 638.61 L801.72 640.13 L802.73 641.80 L803.74 643.67 L804.74 645.75 L805.75 648.08 L806.75 650.69 L807.76 653.61 L808.77 656.89 L809.77 661.15 L810.78 666.54 L811.79 672.88 L812.79 682.06 L813.80 695.30 L814.80 707.27 L815.81 712.48 L816.82 707.24 L817.82 695.23 L818.83 681.99 L819.84 672.91 L820.84 666.56 L821.85 660.83 L822.85 655.72 L823.86 651.25 L824.87 647.43 L825.87 644.28 L826.88 641.55 L827.89 639.10 L828.89 636.89 L829.90 634.90 L830.90 633.10 L831.91 631.45 L832.92 629.93 L833.92 628.49 L834.93 627.08 L835.94 625.72 L836.94 624.42 L837.95 623.21 L838.95 622.11 L839.96 621.14 L840.97 620.32 L841.97 619.68 L842.98 619.20 L843.99 618.78 L844.99 618.39 L846.00 618.03 L847.00 617.73 L848.01 617.49 L849.02 617.33 L850.02 617.26 L851.03 617.30 L852.04 617.49 L853.04 617.80 L854.05 618.22 L855.05 618.73 L856.06 619.33 L857.07 619.99 L858.07 620.70 L859.08 621.48 L860.09 622.59 L861.09 624.04 L862.10 625.80 L863.10 627.80 L864.11 630.01 L865.12 632.36 L866.12 634.81 L867.13 637.76 L868.14 641.88 L869.14 646.76 L870.15 651.96 L871.15 657.04 L872.16 661.56 L873.17 665.08 L874.17 667.15 L875.18 667.39 L876.19 665.99 L877.19 663.34 L878.20 659.78 L879.20 655.65 L880.21 651.30 L881.22 647.05 L882.22 643.26 L883.23 640.26 L884.24 637.78 L885.24 635.32 L886.25 632.94 L887.25 630.68 L888.26 628.57 L889.27 626.66 L890.27 624.99 L891.28 623.60 L892.29 622.50 L893.29 621.48 L894.30 620.48 L895.30 619.55 L896.31 618.70 L897.32 617.95 L898.32 617.34 L899.33 616.89 L900.34 616.62 L901.34 616.55 L902.35 616.61 L903.35 616.74 L904.36 616.94 L905.37 617.19 L906.37 617.49 L907.38 617.82 L908.39 618.17 L909.39 618.57 L910.40 619.14 L911.40 619.88 L912.41 620.77 L913.42 621.77 L914.42 622.86 L915.43 624.03 L916.44 625.24 L917.44 626.48 L918.45 627.72 L919.45 628.94 L920.46 630.14 L921.47 631.56 L922.47 633.21 L923.48 634.99 L924.49 636.81 L925.49 638.58 L926.50 640.23 L927.50 641.66 L928.51 642.80 L929.52 643.54 L930.52 643.80 L931.53 643.50 L932.54 642.64 L933.54 641.33 L934.55 639.66" stroke="#1e1e8e" stroke-width="1.3" stroke-opacity="0.92"/>
<path d="M210.45 299.95 L212.46 300.18 L214.48 300.90 L216.49 302.11 L218.50 303.83 L220.51 306.10 L222.53 308.96 L224.54 312.50 L226.55 316.82 L228.56 322.07 L230.57 328.52 L232.59 336.57 L234.60 347.05 L236.61 361.72 L238.62 385.51 L240.64 404.52 L242.65 377.79 L244.66 363.54 L246.68 355.48 L248.69 350.67 L250.70 347.96 L252.71 346.81 L254.73 346.93 L256.74 348.22 L258.75 350.64 L260.76 354.26 L262.78 359.24 L264.79 365.91 L266.80 374.86 L268.81 387.04 L270.83 402.40 L272.84 406.84 L274.85 394.36 L276.86 383.44 L278.88 375.98 L280.89 370.94 L282.90 367.60 L284.91 365.52 L286.93 364.44 L288.94 364.20 L290.95 364.70 L292.96 365.92 L294.98 367.84 L296.99 370.51 L299.00 374.00 L301.01 378.43 L303.03 383.93 L305.04 390.61 L307.05 398.29 L309.06 405.55 L311.08 408.51 L313.09 405.05 L315.10 398.80 L317.11 392.79 L319.12 387.82 L321.14 383.89 L323.15 380.85 L325.16 378.54 L327.18 376.82 L329.19 375.61 L331.20 374.81 L333.21 374.37 L335.23 374.23 L337.24 374.35 L339.25 374.69 L341.26 375.25 L343.28 375.98 L345.29 376.89 L347.30 377.95 L349.31 379.17 L351.33 380.52 L353.34 382.01 L355.35 383.63 L357.36 385.36 L359.38 387.20 L361.39 389.14 L363.40 391.18 L365.41 393.31 L367.43 395.54 L369.44 397.89 L371.45 400.38 L373.46 403.07 L375.48 406.02 L377.49 409.38 L379.50 413.34 L381.51 418.20 L383.53 424.48 L385.54 433.17 L387.55 446.37 L389.56 470.83 L391.58 618.32 L393.59 470.83 L395.60 446.37 L397.61 433.17 L399.62 424.48 L401.64 418.20 L403.65 413.34 L405.66 409.38 L407.68 406.02 L409.69 403.07 L411.70 400.38 L413.71 397.89 L415.73 395.54 L417.74 393.31 L419.75 391.18 L421.76 389.14 L423.78 387.20 L425.79 385.36 L427.80 383.63 L429.81 382.01 L431.83 380.52 L433.84 379.17 L435.85 377.95 L437.86 376.89 L439.88 375.98 L441.89 375.25 L443.90 374.69 L445.91 374.35 L447.93 374.23 L449.94 374.37 L451.95 374.81 L453.96 375.61 L455.98 376.82 L457.99 378.54 L460.00 380.85 L462.01 383.89 L464.03 387.82 L466.04 392.79 L468.05 398.80 L470.06 405.05 L472.08 408.51 L474.09 405.55 L476.10 398.29 L478.11 390.61 L480.13 383.93 L482.14 378.43 L484.15 374.00 L486.16 370.51 L488.18 367.84 L490.19 365.92 L492.20 364.70 L494.21 364.20 L496.23 364.44 L498.24 365.52 L500.25 367.60 L502.26 370.94 L504.28 375.98 L506.29 383.44 L508.30 394.36 L510.31 406.84 L512.33 402.40 L514.34 387.04 L516.35 374.86 L518.36 365.91 L520.38 359.24 L522.39 354.26 L524.40 350.64 L526.41 348.22 L528.43 346.93 L530.44 346.81 L532.45 347.96 L534.46 350.67 L536.48 355.48 L538.49 363.54 L540.50 377.79 L542.51 404.52 L544.53 385.51 L546.54 361.72 L548.55 347.05 L550.56 336.57 L552.58 328.52 L554.59 322.07 L556.60 316.82 L558.61 312.50 L560.62 308.96 L562.64 306.10 L564.65 303.83 L566.66 302.11 L568.68 300.90 L570.69 300.18 L572.70 299.95 L574.71 300.18 L576.73 300.90 L578.74 302.11 L580.75 303.83 L582.76 306.10 L584.78 308.96 L586.79 312.50 L588.80 316.82 L590.81 322.07 L592.83 328.52 L594.84 336.57 L596.85 347.05 L598.86 361.72 L600.88 385.51 L602.89 404.52 L604.90 377.79 L606.91 363.54 L608.93 355.48 L610.94 350.67 L612.95 347.96 L614.96 346.81 L616.98 346.93 L618.99 348.22 L621.00 350.64 L623.01 354.26 L625.03 359.24 L627.04 365.91 L629.05 374.86 L631.06 387.04 L633.08 402.40 L635.09 406.84 L637.10 394.36 L639.11 383.44 L641.12 375.98 L643.14 370.94 L645.15 367.60 L647.16 365.52 L649.18 364.44 L651.19 364.20 L653.20 364.70 L655.21 365.92 L657.23 367.84 L659.24 370.51 L661.25 374.00 L663.26 378.43 L665.28 383.93 L667.29 390.61 L669.30 398.29 L671.31 405.55 L673.33 408.51 L675.34 405.05 L677.35 398.80 L679.36 392.79 L681.38 387.82 L683.39 383.89 L685.40 380.85 L687.41 378.54 L689.43 376.82 L691.44 375.61 L693.45 374.81 L695.46 374.37 L697.48 374.23 L699.49 374.35 L701.50 374.69 L703.51 375.25 L705.53 375.98 L707.54 376.89 L709.55 377.95 L711.56 379.17 L713.58 380.52 L715.59 382.01 L717.60 383.63 L719.61 385.36 L721.62 387.20 L723.64 389.14 L725.65 391.18 L727.66 393.31 L729.68 395.54 L731.69 397.89 L733.70 400.38 L735.71 403.07 L737.73 406.02 L739.74 409.38 L741.75 413.34 L743.76 418.20 L745.78 424.48 L747.79 433.17 L749.80 446.37 L751.81 470.83 L753.83 619.73 L755.84 470.83 L757.85 446.37 L759.86 433.17 L761.88 424.48 L763.89 418.20 L765.90 413.34 L767.91 409.38 L769.93 406.02 L771.94 403.07 L773.95 400.38 L775.96 397.89 L777.98 395.54 L779.99 393.31 L782.00 391.18 L784.01 389.14 L786.03 387.20 L788.04 385.36 L790.05 383.63 L792.06 382.01 L794.08 380.52 L796.09 379.17 L798.10 377.95 L800.11 376.89 L802.12 375.98 L804.14 375.25 L806.15 374.69 L808.16 374.35 L810.18 374.23 L812.19 374.37 L814.20 374.81 L816.21 375.61 L818.23 376.82 L820.24 378.54 L822.25 380.85 L824.26 383.89 L826.28 387.82 L828.29 392.79 L830.30 398.80 L832.31 405.05 L834.33 408.51 L836.34 405.55 L838.35 398.29 L840.36 390.61 L842.38 383.93 L844.39 378.43 L846.40 374.00 L848.41 370.51 L850.43 367.84 L852.44 365.92 L854.45 364.70 L856.46 364.20 L858.48 364.44 L860.49 365.52 L862.50 367.60 L864.51 370.94 L866.53 375.98 L868.54 383.44 L870.55 394.36 L872.56 406.84 L874.58 402.40 L876.59 387.04 L878.60 374.86 L880.61 365.91 L882.62 359.24 L884.64 354.26 L886.65 350.64 L888.66 348.22 L890.68 346.93 L892.69 346.81 L894.70 347.96 L896.71 350.67 L898.73 355.48 L900.74 363.54 L902.75 377.79 L904.76 404.52 L906.78 385.51 L908.79 361.72 L910.80 347.05 L912.81 336.57 L914.83 328.52 L916.84 322.07 L918.85 316.82 L920.86 312.50 L922.88 308.96 L924.89 306.10 L926.90 303.83 L928.91 302.11 L930.93 300.90 L932.94 300.18 L934.95 299.95" stroke="#0a780a" stroke-width="1.15"/>
</g>
<rect x="204" y="240" width="738" height="435" fill="none" stroke="#6e6e6e" stroke-width="2"/>
<g stroke="#5fa8a8" stroke-width="2"><line x1="251.2" y1="676" x2="251.2" y2="682"/>
<line x1="315.6" y1="676" x2="315.6" y2="682"/>
<line x1="380.0" y1="676" x2="380.0" y2="682"/>
<line x1="444.4" y1="676" x2="444.4" y2="682"/>
<line x1="508.8" y1="676" x2="508.8" y2="682"/>
<line x1="573.2" y1="676" x2="573.2" y2="682"/>
<line x1="637.6" y1="676" x2="637.6" y2="682"/>
<line x1="702.0" y1="676" x2="702.0" y2="682"/>
<line x1="766.4" y1="676" x2="766.4" y2="682"/>
<line x1="830.8" y1="676" x2="830.8" y2="682"/>
<line x1="895.2" y1="676" x2="895.2" y2="682"/>
<line x1="197" y1="670.5" x2="203" y2="670.5"/>
<line x1="197" y1="635.1" x2="203" y2="635.1"/>
<line x1="197" y1="599.7" x2="203" y2="599.7"/>
<line x1="197" y1="564.3" x2="203" y2="564.3"/>
<line x1="197" y1="528.9" x2="203" y2="528.9"/>
<line x1="197" y1="493.5" x2="203" y2="493.5"/>
<line x1="197" y1="458.1" x2="203" y2="458.1"/>
<line x1="197" y1="422.7" x2="203" y2="422.7"/>
<line x1="197" y1="387.3" x2="203" y2="387.3"/>
<line x1="197" y1="351.9" x2="203" y2="351.9"/>
<line x1="197" y1="316.5" x2="203" y2="316.5"/>
<line x1="197" y1="281.1" x2="203" y2="281.1"/>
<line x1="197" y1="245.7" x2="203" y2="245.7"/></g>
<g transform="scale(0.92 1)" font-family="Liberation Sans, sans-serif" font-size="13" fill="#000"><text x="271.96" y="695" text-anchor="middle">-160</text>
<text x="341.96" y="695" text-anchor="middle">-128</text>
<text x="411.96" y="695" text-anchor="middle">-96</text>
<text x="481.96" y="695" text-anchor="middle">-64</text>
<text x="551.96" y="695" text-anchor="middle">-32</text>
<text x="621.96" y="695" text-anchor="middle">0</text>
<text x="691.96" y="695" text-anchor="middle">32</text>
<text x="761.96" y="695" text-anchor="middle">64</text>
<text x="831.96" y="695" text-anchor="middle">96</text>
<text x="901.96" y="695" text-anchor="middle">128</text>
<text x="971.96" y="695" text-anchor="middle">160</text>
<text x="209.46" y="675.1" text-anchor="end">-80</text>
<text x="209.46" y="639.7" text-anchor="end">-70</text>
<text x="209.46" y="604.3" text-anchor="end">-60</text>
<text x="209.46" y="568.9" text-anchor="end">-50</text>
<text x="209.46" y="533.5" text-anchor="end">-40</text>
<text x="209.46" y="498.1" text-anchor="end">-30</text>
<text x="209.46" y="462.7" text-anchor="end">-20</text>
<text x="209.46" y="427.3" text-anchor="end">-10</text>
<text x="209.46" y="391.9" text-anchor="end">0</text>
<text x="209.46" y="356.5" text-anchor="end">10</text>
<text x="209.46" y="321.1" text-anchor="end">20</text>
<text x="209.46" y="285.7" text-anchor="end">30</text>
<text x="209.46" y="250.3" text-anchor="end">40</text></g>
<text x="537" y="230" text-anchor="middle" font-family="Liberation Sans, sans-serif" font-size="16" fill="#000">mom_rcs_cart_zx</text>
<text x="572.5" y="714" text-anchor="middle" font-family="Liberation Sans, sans-serif" font-size="16" fill="#000">theta</text>
<text transform="translate(142.5 437) rotate(-90)" text-anchor="middle" font-family="Liberation Sans, sans-serif" font-size="16" fill="#000">rcs_theta_db</text>
<g fill="rgba(255,255,255,0.85)" stroke="#3d9bff" stroke-width="1.3" stroke-linejoin="round">
<path d="M204 241 L208.3 247.5 L206.2 247.5 L206.2 254 L201.8 254 L201.8 247.5 L199.7 247.5 Z"/>
<path d="M204 674 L199.7 667.5 L201.8 667.5 L201.8 661 L206.2 661 L206.2 667.5 L208.3 667.5 Z"/>
<path d="M204 675 L210 679 L210 677 L218 677 L218 673 L210 673 L210 671 Z"/>
<path d="M941 675 L935 679.5 L935 677 L927.5 677 L927.5 673 L935 673 L935 670.5 Z"/>
</g>
</svg>

<!-- legend -->
<div class="abs" style="left:37px;top:114px;width:119px;height:57px;background:#fff;border:1px solid #5a5a5a;box-sizing:border-box;box-shadow:2px 2px 2px rgba(0,0,0,0.5)"></div>
<div class="cb" style="top:119px"></div>
<div class="cb" style="top:136px"></div>
<div class="cb" style="top:153px"></div>
<svg class="abs" style="left:0;top:0" width="160" height="175" viewBox="0 0 160 175">
<g fill="none" stroke="#000" stroke-width="1.8" stroke-linecap="square">
<path d="M44.5 125 L46.5 127.5 L50.5 122"/>
<path d="M44.5 142 L46.5 144.5 L50.5 139"/>
<path d="M44.5 159 L46.5 161.5 L50.5 156"/>
</g>
<path d="M57 125 H77" stroke="#ff0000" stroke-width="2"/>
<path d="M57 142 H77" stroke="#7272c0" stroke-width="2"/>
<path d="M57 159 H77" stroke="#68b068" stroke-width="2"/>
</svg>
<div class="lg" style="top:119px">rcs_theta_db</div>
<div class="lg" style="top:136px">rcs_phi_db</div>
<div class="lg" style="top:153px">rcs_total_db</div>

<!-- cursor table -->
<div class="abs" style="left:37px;top:820px;width:1005px;height:35px;background:#efefef;border-top:1px solid #d6d6d6;box-sizing:border-box"></div>
<div class="abs" style="left:37px;top:836px;width:1005px;height:1px;background:#d6d6d6"></div>
<div class="hd" style="left:37px">X-Cursor</div>
<div class="hd" style="left:180px">Y-Cursor</div>
<div class="hd" style="left:323px">V-Caliper</div>
<div class="hd" style="left:466px">H-Cal (dX)</div>
<div class="hd" style="left:609px">H-Cal (1/dX)</div>
<div class="hd" style="left:752px">Horz-D</div>
<div class="hd" style="left:895px">Vert-D</div>
<div class="vl" style="left:37px">-2.887e+02</div>
<div class="vl" style="left:180px">1.048e+01</div>
<div class="sep" style="left:179px"></div>
<div class="sep" style="left:322px"></div>
<div class="sep" style="left:465px"></div>
<div class="sep" style="left:608px"></div>
<div class="sep" style="left:751px"></div>
<div class="sep" style="left:894px"></div>
<div class="sep" style="left:1037px"></div>

<div id="status"></div>
<svg class="abs" style="left:1039px;top:874px" width="10" height="11" viewBox="0 0 10 11">
<g fill="#b8b8b8"><rect x="7" y="1" width="2" height="2"/><rect x="4" y="4" width="2" height="2"/><rect x="7" y="4" width="2" height="2"/><rect x="1" y="7" width="2" height="2"/><rect x="4" y="7" width="2" height="2"/><rect x="7" y="7" width="2" height="2"/></g>
</svg>
</body></html>
